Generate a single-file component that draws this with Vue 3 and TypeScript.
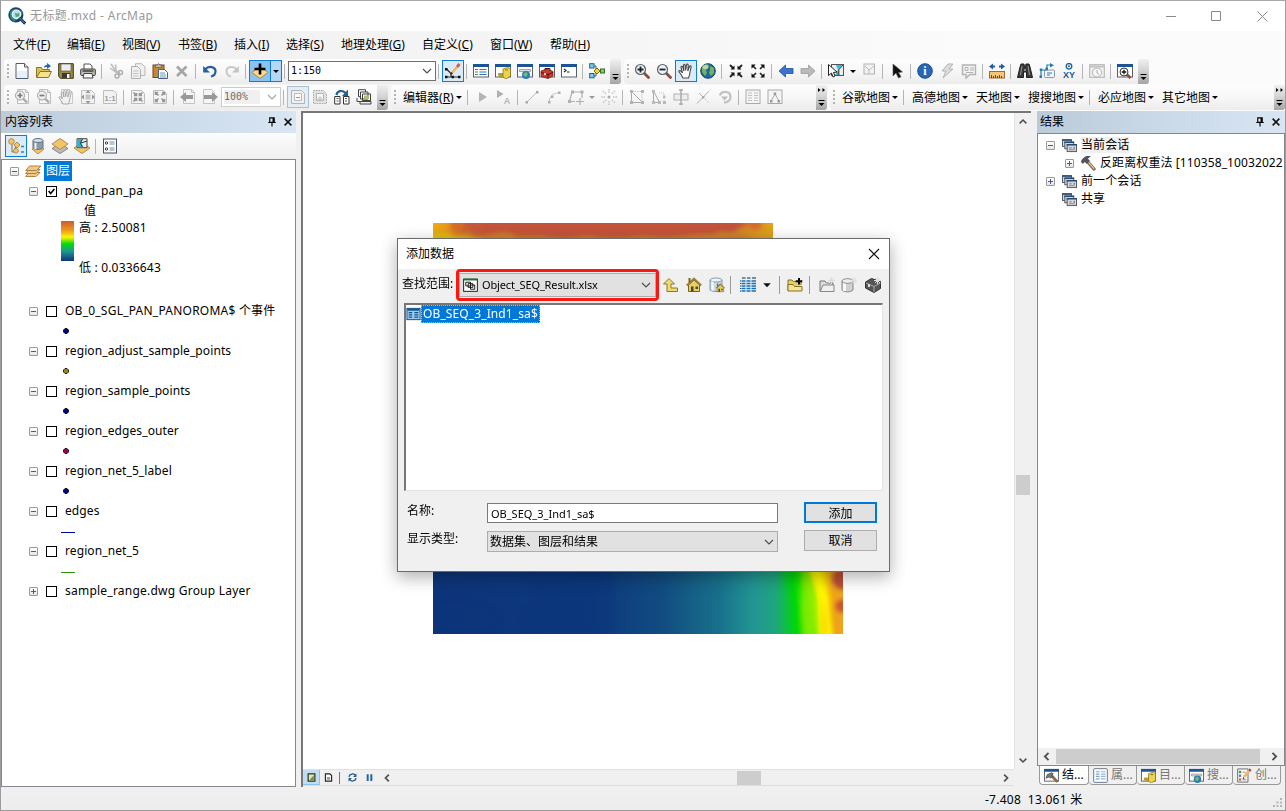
<script setup lang="ts">
import { ref } from 'vue'

interface Tool {
  t: 'icon' | 'sep' | 'scale' | 'zoom' | 'label'
  n?: string
  on?: boolean
  add?: boolean
  arrow?: boolean
  text?: string
  key?: string
}
interface Bar { id: string; double?: boolean; tools: Tool[] }
interface Layer { name: string; open: boolean; dot?: string; line?: string; wide?: boolean }

const sep: Tool = { t: 'sep' }
const icons = (...names: string[]): Tool[] => names.map(n => ({ t: 'icon', n }))
const label = (text: string, key?: string): Tool => ({ t: 'label', text, key })

// Shared fragments
const page = (c: string, f = '#f6f6f6') => `<path d="M3.500.500h8l3 3v11h-11z" fill="${f}" stroke="${c}"/><path d="M11.500.500v3h3" fill="none" stroke="${c}"/>`
const win = (inner: string) => `<rect x=".5" y="1.500" width="15" height="12.500" fill="#fff" stroke="#5a6068"/><rect x="0" y="1" width="16" height="3" fill="#1d5496"/>${inner}`
const grayIn = '<path d="M3.500 3.500l3 3m0-2.500v2.500h-2.500M12.500 3.500l-3 3m0-2.500v2.500h2.500M3.500 12.500l3-3m0 2.500v-2.500h-2.500M12.500 12.500l-3-3m0 2.500v-2.500h2.500" stroke="#959595" stroke-width="1.600" fill="none"/>'
const grayOut = '<path d="M6.500 6.500l-3-3m0 2.500v-2.500h2.500M9.500 6.500l3-3m0 2.500v-2.500h-2.500M6.500 9.500l-3 3m0-2.500v2.500h2.500M9.500 9.500l3 3m0-2.500v2.500h-2.500" stroke="#959595" stroke-width="1.600" fill="none"/>'
const grayBox = '<path d="M1.500 1.500h10l3 3v10h-13z" fill="#f2f2f2" stroke="#bdbdbd"/>'
const handPath = 'M5 15L3 11.500 1 8.800c-.4-1.300 1-1.600 1.900-.6L4.500 10 3 4.500C2.800 3 4.300 2.800 4.700 4L6 8 5.500 2.600C5.400 1 7 1 7.200 2.400L7.700 7.500 8.500 2c.3-1.400 1.800-1.100 1.700.3L9.800 8l1.700-4.500c.5-1.200 1.900-.7 1.600.6L12 9c-.2 2-.6 4-1.500 6z'
const lens = (sign: string) => `<path d="M10 10l4.500 4.500" stroke="#8a4c3a" stroke-width="2.800" stroke-linecap="round"/><circle cx="6.500" cy="6.500" r="5" fill="#e9f3fa" stroke="#59636b" stroke-width="1.200"/><path d="${sign}" stroke="#222" stroke-width="1.800"/>`
const grayLens = (sign: string) => `${page('#bdbdbd')}<path d="M9 9.500l4 4" stroke="#aaa" stroke-width="2.400"/><circle cx="6" cy="6.500" r="4.500" fill="#efefef" stroke="#a0a0a0"/><path d="${sign}" stroke="#7d7d7d" stroke-width="1.700"/>`
const goldHouse = '<path d="M2.500 8v6.500h11V8L8 3z" fill="#e5cf62" stroke="#766126"/><path d="M.7 8.500L8 1.500l7.300 7" fill="none" stroke="#9c8334" stroke-width="1.800"/><path d="M3.500 1v4.500" stroke="#766126" stroke-width="2"/><path d="M5 9.500h2.500v5H5z" fill="#55441c"/><path d="M9.500 9.500h2.500v2.500H9.500z" fill="#4a4a4a"/>'
const gold = '#f0c468'

const art: Record<string, string> = {
  logo: '<circle cx="7" cy="7" r="6.700" fill="#14456b"/><path d="M1.500 4Q5 1 7 2t5 1l1 3-3 4-5 3-3-3z" fill="#2d8674"/><circle cx="7.500" cy="6.500" r="3.800" fill="#b9dcef" stroke="#eef6fb"/><path d="M6 5l2 1 2-1v3l-3 1z" fill="#53a66c"/><path d="M10 9.500l5.300 5.300" stroke="#143850" stroke-width="2.600"/><path d="M10 9.500l4.500 4.500" stroke="#6aa7ca" stroke-width=".8"/>',
  new: '<path d="M2 .5h8.500l3.500 3.500v11.500H2z" fill="#fff" stroke="#555b64"/><path d="M3 8h10v7H3z" fill="#e3f1fc"/><path d="M10.500.5v3.500H14" fill="#dfe9f2" stroke="#555b64"/>',
  open: '<path d="M.5 14.500V4.500h5l1 2h7v3" fill="#d8c356" stroke="#8b7424"/><path d="M.7 14.500L4 8.500h11.500l-3 6z" fill="#f6e18d" stroke="#8b7424"/><path d="M8 5c0-2 1-3 3-3V0l4 3-4 3V4c-1.500 0-2 0-3 1z" fill="#2a67ad"/>',
  save: '<path d="M.7.700h14.600v14.600H2.500L.7 13.500z" fill="#9c8a3c" stroke="#3c3720"/><path d="M3 1h10v7H3z" fill="#e9eef3" stroke="#514a2a" stroke-width=".6"/><path d="M4 10h8.500v5H4z" fill="#3c3b36"/><path d="M9 11h2.500v4H9z" fill="#f4f4f4"/>',
  print: '<path d="M4 6V1h6l2 2v3" fill="#fff" stroke="#555"/><rect x=".7" y="6" width="14.600" height="6.500" rx="1" fill="#bcbcbc" stroke="#3c3c3c"/><path d="M2.500 8h11" stroke="#444" stroke-width="1.600"/><path d="M4 10.500h8l1 4.500H3z" fill="#f8f8f8" stroke="#444"/><path d="M12 9.500h1.500" stroke="#9dc64e" stroke-width="1.500"/>',
  cut: '<path d="M3 1l6 9M7.500 1.500L8 8l4 2.500M2 5l7 5" stroke="#bcbcbc" stroke-width="1.500" fill="none"/><circle cx="12.500" cy="9.500" r="2" fill="none" stroke="#adadad" stroke-width="1.400"/><circle cx="9" cy="13" r="2" fill="none" stroke="#adadad" stroke-width="1.400"/>',
  copy: '<path d="M5.500.700h6l3.500 3v8.800H5.500z" fill="#f0f0f0" stroke="#b8b8b8"/><path d="M1.500 3.500h6l3 3v9h-9z" fill="#f0f0f0" stroke="#b0b0b0"/><path d="M3 8h5.500M3 10.500h5.500M3 13h5.500" stroke="#c4c4c4"/>',
  paste: '<rect x="1" y="2" width="11" height="12.500" fill="#c98636" stroke="#6c4b23"/><path d="M3.500 4.500V2h2L6.500.500 7.500 2h2v2.500z" fill="#b9bcc0" stroke="#555" stroke-width=".7"/><path d="M6.500 6.500h6l3 3v6h-9z" fill="#fff" stroke="#456285"/><path d="M8 10h5M8 12h6M8 14h6" stroke="#6e95bd"/>',
  del: '<path d="M3 3.500l9.500 9.500M12.500 3.500L3 13" stroke="#a5a5a5" stroke-width="2.600"/>',
  undo: '<path d="M3 6.500C7 2 13.500 4 13.500 8c0 3-2 5-4.500 5.500" fill="none" stroke="#245e9f" stroke-width="2.200"/><path d="M1.200 3V9.500H8z" fill="#245e9f"/>',
  redo: '<path d="M13 6.500C9 2 2.500 4 2.500 8c0 3 2 5 4.500 5.500" fill="none" stroke="#c8c8c8" stroke-width="2"/><path d="M14.800 3V9.500H8z" fill="#c4c4c4"/>',
  add: '<path d="M0 9.500l8-6.500 8 6.500-8 6z" fill="#ffd98a" stroke="#a88750"/><path d="M8 .500v11M2.500 6h11" stroke="#000" stroke-width="2.600"/>',
  sketch: '<path d="M1.500 6L6 10.500M2 14h12.500M6 10v4" stroke="#282828" fill="none" stroke-width="1.200"/><path d="M6.500 10.500L12 4" stroke="#f0b46b" stroke-width="2.600"/><path d="M12 4l2.500-3" stroke="#ca604b" stroke-width="2.800"/><path d="M5.500 12l.5-3 2 1.500z" fill="#222"/><path d="M0 5h2.500v2.500H0zM0 12.700h2.500v2.500H0zM6.500 12.700H9v2.500H6.500zM13 12.700h2.500v2.500H13z" fill="#111"/>',
  toc: win('<path d="M2 6.500h3M2 9h3M2 11.500h3" stroke="#4e8946" stroke-width="1.200"/><path d="M6.500 6.500h7M6.500 9h7M6.500 11.500h7" stroke="#2e72bd" stroke-width="1.200"/>'),
  catalog: win('<path d="M3 10h6v5H5l-2-3z" fill="#bb9c33"/><path d="M8 6l5-1.500 2.500 1.500v7l-4.500 3-3-2z" fill="#ecd544" stroke="#8d7625" stroke-width=".8"/><path d="M10 7h3" stroke="#876f20"/>'),
  search: win('<path d="M2.500 6.500h11v2h-11z" fill="#ddd" stroke="#888" stroke-width=".7"/><circle cx="9" cy="12" r="4" fill="#2d7bb6"/><path d="M6 11l3-2 2 2-2 3-2-1z" fill="#73bc63"/>'),
  toolbox: win('<path d="M2 8l6-2 6 2.500V13l-5 2.500-7-2z" fill="#c43d30" stroke="#782219" stroke-width=".8"/><path d="M6 7V5.500h5V8M2 9.500l7 2 5-2M9 11v4" stroke="#50110b" fill="none"/><path d="M5 10h2v2H5z" fill="#efc7bd"/>'),
  python: win('<path d="M3 6l2 1.500L3 9M6 9h2.500" fill="none" stroke="#222" stroke-width="1.200"/>'),
  model: '<path d="M5 3h2v10H5M7 8h5" fill="none" stroke="#4b5d70"/><rect x=".7" y=".700" width="4.300" height="4.300" fill="#84cde8" stroke="#126791"/><rect x=".7" y="10.500" width="4.300" height="4.300" fill="#84cde8" stroke="#126791"/><path d="M8 5l3 3-3 3-3-3z" fill="#f6d33c" stroke="#826b0d"/><rect x="11.500" y="6" width="4" height="4" fill="#84cb72" stroke="#2f6d29"/>',
  zoomin: lens('M6.500 3.500v6M3.500 6.500h6'),
  zoomout: lens('M3.500 6.500h6'),
  hand: `<path d="${handPath}" fill="#fff" stroke="#4a4a4a" stroke-width="1.100"/>`,
  globe: '<circle cx="8" cy="8" r="7.300" fill="#1c66ad" stroke="#164272"/><path d="M2 4l4-3 3 1-1 3-2 2 1 3-2 3-3-4zM10 3l4 2v5l-3 3-2-3 1-3z" fill="#77b254"/><ellipse cx="5.500" cy="4" rx="3" ry="2" fill="#fff" opacity=".5"/>',
  fixin: '<path d="M2 2l3 3M14 2l-3 3M2 14l3-3M14 14l-3-3" stroke="#222" stroke-width="1.800"/><path d="M6.500 2.500v4H2.500zM9.500 2.500v4h4zM6.500 13.500v-4h-4zM9.500 13.500v-4h4z" fill="#111"/>',
  fixout: '<path d="M3 3l3 3M13 3l-3 3M3 13l3-3M13 13l-3-3" stroke="#222" stroke-width="1.600"/><path d="M1.500 5.700V1.500h4.200zM14.500 5.700V1.500h-4.200zM1.500 10.300v4.200h4.200zM14.500 10.300v4.200h-4.200z" fill="#111"/>',
  back: '<path d="M1 8l6.500-6v3.500H15v5H7.500V14z" fill="#3873d0" stroke="#244f9c" stroke-width=".8"/>',
  forward: '<path d="M15 8L8.500 2v3.500H1v5h7.500V14z" fill="#b9b9b9" stroke="#9c9c9c" stroke-width=".8"/>',
  select: '<rect x="3.500" y="1.500" width="12" height="11" fill="#eee" stroke="#555"/><path d="M8 2h7l-4 4 1 6H7l3-5z" fill="#35bde4"/><path d="M10 12.500l1-6 4-4.500" stroke="#444" fill="none"/><path d="M.5 1.500v11l3-2.500 1.500 4 2-1-1.500-3.500 3.500-.5z" fill="#fff" stroke="#222"/>',
  clear: '<rect x="3" y="1" width="10.500" height="10" fill="#f2f2f2" stroke="#b2b2b2"/><path d="M4 3l4 4 5-4M8 7v4" stroke="#bbb" fill="none"/>',
  pointer: '<path d="M4 1v12l3-3 2.500 5 2.500-1.200L9.500 9.500 13.500 9z" fill="#111" stroke="#555" stroke-width=".6"/>',
  info: '<circle cx="8" cy="8" r="7.300" fill="#2966b7" stroke="#174c92"/><text x="8" y="12.300" text-anchor="middle" font-family="Liberation Serif,serif" font-weight="bold" font-size="12" fill="#fff">i</text>',
  bolt: '<path d="M9 1L3 8h4l-3 7 10-9h-4l4-5z" fill="#ddd" stroke="#b4b4b4"/>',
  popup: '<path d="M1.500 2h13v9.500H9L5 15v-3.500H1.500z" fill="#f3f3f3" stroke="#b2b2b2" stroke-width="1.400"/><path d="M4 4.500h3v3H4zM9 5h4M9 7h4M5 9.500h7" stroke="#b2b2b2" fill="none"/>',
  measure: '<path d="M2 3.500h4M10 3.500h4" stroke="#245d9d" stroke-width="1.800"/><path d="M0 3.500L4 .500v6zM16 3.500l-4-3v6z" fill="#245d9d"/><rect x=".5" y="8.500" width="15" height="6.500" fill="#f5c679" stroke="#9b6c38"/><path d="M2.500 15v-3M4.500 15v-2M6.500 15v-3M8.500 15v-2M10.500 15v-3M12.500 15v-2" stroke="#6d4a25"/>',
  find: '<path d="M3 4l1-3h3l.5 3h1L9 1h3l1 3 2.500 10.500H9.500V9h-3v5.500H.5z" fill="#383838" stroke="#222"/><path d="M5 3L3.500 12M11 3l1.500 9" stroke="#999"/><path d="M7 6h2v2H7z" fill="#888"/>',
  route: '<rect x="5.500" y="7" width="10" height="7.500" rx="1" fill="#f4f8fc" stroke="#8099ae"/><path d="M2 13V7h6V2h4" fill="none" stroke="#287ab1" stroke-width="1.200"/><path d="M11 0l4 2.200-4 2.300zM.8 5.500h2.500V8H.8zM.5 12.500H3V15H.5zM6.500 4.500H9V7H6.500z" fill="#287ab1"/><path d="M8 10h5M8 12h3" stroke="#287ab1"/>',
  xy: '<circle cx="8" cy="3.300" r="2.800" fill="none" stroke="#1c639e" stroke-width="1.400"/><circle cx="8" cy="3.300" r="1" fill="#1c639e"/><text x="8" y="15" text-anchor="middle" font-family="Liberation Sans,sans-serif" font-weight="bold" font-size="9" fill="#1c5696">XY</text>',
  time: '<rect x=".7" y="1.700" width="14.600" height="12.600" fill="#eee" stroke="#b2b2b2"/><path d="M1 3.500h14" stroke="#c2c2c2" stroke-width="2"/><circle cx="8" cy="9.500" r="4.500" fill="#f7f7f7" stroke="#b2b2b2"/><path d="M8 7v3l2 1.500" stroke="#aaa" fill="none"/>',
  viewer: win('<path d="M9.500 11l4 4" stroke="#87503d" stroke-width="2.600"/><circle cx="7" cy="9" r="4" fill="#fff" stroke="#333"/><path d="M7 6.700v4.600M4.700 9h4.600" stroke="#111" stroke-width="1.300"/>'),
  gzoomin: grayLens('M6 4v5M3.500 6.500h5'),
  gzoomout: grayLens('M3.500 6.500h5'),
  ghand: page('#c8c8c8') + `<path d="${handPath}" fill="#f1f1f1" stroke="#a2a2a2" stroke-width=".9"/>`,
  gwhole: grayBox + '<path d="M8 1l2.500 3h-5zM8 15l2.500-3h-5zM1 8l3-2.500v5zM15 8l-3-2.500v5z" fill="#999"/><rect x="5.500" y="5.500" width="5" height="5" fill="#c4c4c4"/>',
  gone: grayBox + '<text x="8" y="11.500" text-anchor="middle" font-family="Liberation Sans,sans-serif" font-weight="bold" font-size="8" fill="#a0a0a0">1:1</text>',
  gfixin: grayBox + grayIn,
  gfixout: grayBox + grayOut,
  gback: page('#c2c2c2') + '<path d="M0 8l6-5v3h7v4H6v3z" fill="#999"/>',
  gforward: '<path d="M1.500.500h8l3 3v11h-11z" fill="#f6f6f6" stroke="#c2c2c2"/><path d="M16 8l-6-5v3H2v4h8v3z" fill="#999"/>',
  gdraft: '<path d="M1.500 1.500h10l3 3v10h-13z" fill="#f0f0f0" stroke="#b5b5b5"/><path d="M4.500 4.500h7v7h-7z" fill="#fafafa" stroke="#bbb"/><path d="M6 8.500h4" stroke="#999"/>',
  gfocus: '<path d="M1.500 1.500h10l3 3v10h-13z" fill="#e2e2e2" stroke="#a6a6a6" stroke-dasharray="1.500 1"/><path d="M4.500 4.500h7v7h-7z" fill="#f8f8f8" stroke="#b5b5b5"/><path d="M5 11l3-4 3 4z" fill="#ccc"/>',
  swap: '<path d="M2.500 6C3 2 8 .5 11.500 4" fill="none" stroke="#28618e" stroke-width="2.200"/><path d="M14 .500v6.500H8z" fill="#28618e"/><path d="M.7 7.500h5.300v7.500H.7zM9.500 7.500h5.500v7.500H9.500z" fill="#fff" stroke="#333"/><path d="M2.500 9.500h2M2.500 12h2M11 9.500h2M11 12h2" stroke="#555"/>',
  pages: '<path d="M2.500.700h7v7h-7z" fill="#fff" stroke="#404040"/><path d="M4.500 3h7.500v7H4.500zM6.500 5h8v6.500h-8z" fill="#fff" stroke="#404040"/><path d="M8 6.500h5v3.500H8z" fill="#a8bd75"/><path d="M1 9v3.500h14v2.500H4v-2" fill="none" stroke="#444"/>',
  play: '<path d="M5 3v10l8-5z" fill="#b5b5b5"/>',
  playa: '<path d="M1 1v8l6.500-4z" fill="#b0b0b0"/><text x="11" y="15" text-anchor="middle" font-family="Liberation Sans,sans-serif" font-weight="bold" font-size="9" fill="#b5b5b5">A</text>',
  line: '<path d="M3 13L12.500 3.500" stroke="#b8b8b8"/><path d="M1.500 12H4v2.500H1.500zM12 2h2.500v2.500H12z" fill="#a8a8a8"/>',
  arc: '<path d="M3 13C4 7 7 4 12.500 4" fill="none" stroke="#c4c4c4"/><path d="M2 12h2.500v2.500H2zM5 6.500h2.500V9H5zM12 2.500h2.500V5H12z" fill="#b0b0b0"/>',
  trace: '<path d="M1.500 12.500H7M4 3h10v6M4 3L1.500 12.500M8 12.500h8M12 9v7" fill="none" stroke="#b0b0b0" stroke-width="1.200"/><path d="M0 11h3v3H0zM3 1.500h3v3H3zM12.500 1.500h3v3h-3z" fill="#b0b0b0"/>',
  burst: '<path d="M8 0v4M8 12v4M0 8h4M12 8h4M2 2l3 3M11 11l3 3M14 2l-3 3M5 11l-3 3" stroke="#c2c2c2" stroke-width="1.500" stroke-dasharray="1.500 1"/><circle cx="8" cy="8" r="1.500" fill="#aaa"/>',
  poly: '<path d="M2.500 3v10.500h11L2.500 2.500" fill="none" stroke="#aaa"/><path d="M3 2.500h10v10" fill="none" stroke="#c0c0c0" stroke-dasharray="1.500 1"/><path d="M1 1h3v3H1zM12 1h3v3h-3zM1 12h3v3H1zM12 12h3v3h-3z" fill="#b2b2b2"/>',
  reshape: '<path d="M2.500 2v11.500h6L2.500 2" fill="none" stroke="#aaa"/><path d="M8 4h5v9" fill="none" stroke="#c4c4c4" stroke-dasharray="1 1"/><path d="M1 1h3v3H1zM1 12h3v3H1zM7 12h3v3H7zM12 6.500h2.500V9H12zM12 12h3v3h-3z" fill="#bbb"/>',
  cutpoly: '<rect x="1" y="5" width="14" height="6" fill="#eee" stroke="#b0b0b0"/><path d="M8 0v16M6 1h4M6 15h4" stroke="#aaa" stroke-width="1.500"/>',
  split: '<path d="M2 14.500L14 2M4 4l5 5" stroke="#b0b0b0"/><path d="M7 7h2.500v2.500H7z" fill="#aaa"/><path d="M10 10l4 4" stroke="#c4c4c4" stroke-dasharray="1.500 1"/>',
  rotate: '<path d="M3 6.500c1-5 10-5 10.500 1 0 4-3 6-6.500 6" fill="none" stroke="#c4c4c4" stroke-width="2.400"/><path d="M4 7.500h7l-3.500 4z" fill="#bbb"/>',
  table: '<rect x="1" y="1" width="14" height="13.500" fill="#f5f5f5" stroke="#aaa"/><path d="M3 4h4M9 4h4M3 6.500h4M9 6.500h4M3 9h4M9 9h4M3 11.500h4M9 11.500h4" stroke="#c0c0c0" stroke-width="1.200"/>',
  vertex: '<rect x="1" y="1" width="14" height="13.500" fill="#f5f5f5" stroke="#aaa"/><path d="M4 12l4-7 4 7" fill="none" stroke="#aaa"/><path d="M3 11h2.500v2.500H3zM6.700 3.500h2.500V6H6.700zM10.500 11H13v2.500h-2.500z" fill="#999"/>',
  bydraw: `<path d="M4 5v9h6M8 8l-2 5" stroke="#887141" fill="none"/><circle cx="3.500" cy="3.500" r="2.800" fill="${gold}" stroke="#b38b47"/><path d="M9 4l3 3-3 3-3-3zM8 10l3 2.700-3 2.700-3-2.700z" fill="${gold}" stroke="#b38b47"/><path d="M13 8.500h3M13 14h3" stroke="#3982aa" stroke-width="1.600"/>`,
  bysource: `<path d="M2 11l6-3 6 3-6 5z" fill="${gold}" stroke="#b38b47"/><path d="M3 2.500v7c1.500 2.500 8.500 2.500 10 0v-7z" fill="#8b9baa" stroke="#5f7081"/><path d="M5.500 3v8" stroke="#eef3f7" stroke-width="2"/><ellipse cx="8" cy="2.500" rx="5" ry="2" fill="#d7e1e9" stroke="#5f7081"/>`,
  byvis: `<path d="M0 10.500l8-5 8 5-8 5z" fill="#bbb" stroke="#888"/><path d="M0 6l8-5.500L16 6l-8 5.500z" fill="${gold}" stroke="#b38b47"/>`,
  bysel: `<path d="M0 10l8-5 8 5-8 5.500z" fill="${gold}" stroke="#b38b47"/><path d="M3 .7h10v9H3z" fill="#e4eef0" stroke="#444"/><path d="M3.500 1h5l-2 4 3 4.200h-6z" fill="#27b6d0"/><path d="M8.500 9l-2-4 2-4M7 5l6-2" stroke="#333" fill="none"/>`,
  opts: '<rect x="1.500" y="1" width="13" height="14" fill="#fff" stroke="#465566"/><circle cx="4.500" cy="5" r="1.200" fill="none" stroke="#333"/><circle cx="4.500" cy="11" r="1.200" fill="none" stroke="#333"/><path d="M7.500 4h5M7.500 6h5M7.500 10h5M7.500 12h5" stroke="#7486a2"/>',
  layers: '<g fill="#f1c987" stroke="#a57841" stroke-width=".9"><path d="M.6 13.500L4 9.500h11l-4 4z"/><path d="M.6 10.500L4 6.500h11l-4 4z"/><path d="M.8 7.500L4.500 3H16l-4.500 4.500z"/></g>',
  session: '<g fill="#d4d7db" stroke="#4d545f"><rect x=".5" y="2" width="9.500" height="7"/><rect x="3" y="4.500" width="9.500" height="7"/><rect x="5.500" y="7" width="10" height="7.500"/></g><path d="M0 2h10.500M2.500 4.500h10.500M5 7.200H16" stroke="#27486f" stroke-width="1.600"/><path d="M7.500 10.500h3M7.500 12.500h6" stroke="#888"/><path d="M13 9.500v2" stroke="#555"/>',
  hammer: '<path d="M7 6l7 8" stroke="#817260" stroke-width="3.400" stroke-linecap="round"/><path d="M7 5.500l7 8" stroke="#d7c3a0" stroke-width="1.300"/><path d="M0 6l2-3 4-3h4L7 3l2 2-2.500 3L4 6 2 8z" fill="#55585b" stroke="#303030" stroke-width=".6"/>',
  hamwin: win('<path d="M8 8l5.500 6" stroke="#8b6848" stroke-width="3" stroke-linecap="round"/><path d="M2 11l1.500-4L8 5l2 1-2 2 1 1-2 2-1.500-1.500z" fill="#777" stroke="#333" stroke-width=".6"/>'),
  attrs: '<rect x=".7" y=".7" width="14.600" height="14.600" rx="1" fill="#fff" stroke="#637383"/><path d="M3 4h4M3 6.500h4M3 9h4M3 11.500h4" stroke="#7aa2c9" stroke-width="1.300"/><path d="M8.500 4h5M8.500 6.500h5M8.500 9h5M8.500 11.500h5" stroke="#8eb8dd" stroke-width="1.300"/>',
  create: '<path d="M.7 1h11v14H.7z" fill="#f7f7f7" stroke="#666"/><path d="M2 3h2.500v2.500H2z" fill="#4c8d54"/><path d="M2 11h2.500v2.500H2z" fill="#c76b41"/><path d="M2 7h2.500v2.500H2z" fill="#4b84b9"/><path d="M6 4.500h3M6 12.500h4" stroke="#888"/><path d="M7.500 9.500L13 3" stroke="#efb765" stroke-width="2.800"/><path d="M13 3l1.500-1.800" stroke="#b64e49" stroke-width="3"/><path d="M6 12l.5-2.500 1.700 1.300z" fill="#333"/>',
  sheets: '<rect x=".7" y="1.200" width="14.600" height="13" fill="#fff" stroke="#111"/><path d="M1 1.700h14" stroke="#1a722a" stroke-width="1.800"/><g fill="#fff" stroke="#111"><path d="M3 4.500h5v4H3zM5.500 6h5v4h-5zM8 7.500h4.500V12H8z"/></g>',
  up: '<path d="M.5 7L6 1.500 11.500 7H8v4h6.500v3.500H4V7z" fill="#efdb6b" stroke="#8b7830"/>',
  home: goldHouse,
  dbhome: `<path d="M1 3v10c2 2 10 2 12 0V3z" fill="#c8dbe9" stroke="#8199aa"/><ellipse cx="7" cy="3" rx="6" ry="2" fill="#edf5fa" stroke="#8199aa"/><path d="M3.500 4.500v9" stroke="#fff" stroke-width="2"/><g transform="translate(6.500 6) scale(.6)">${goldHouse}</g>`,
  list: '<path d="M2 1h3.500M7 1h3.500M12 1h4" stroke="#4f6d84" stroke-width="1.400"/><path d="M1.500 4h4M6.500 4h4M11.500 4H16M1.500 6.500h4M6.500 6.500h4M11.500 6.500H16M1.500 9h4M6.500 9h4M11.500 9H16M1.500 11.500h4M6.500 11.500h4M11.500 11.500H16M1.500 14h4M6.500 14h4M11.500 14H16" stroke="#1272c0" stroke-width="1.300"/><path d="M0 4h1M0 6.500h1M0 9h1M0 11.500h1M0 14h1" stroke="#333"/>',
  link: '<path d="M1 14V3h4l1.500 1.500H14V8" fill="#e4cf62" stroke="#8a732a"/><path d="M1 14V7.500h5l1.500 2H15V14z" fill="#f4e495" stroke="#8a732a"/><path d="M12 1v6.500M8.700 4.200h6.600" stroke="#000" stroke-width="2"/>',
  newfolder: '<path d="M1 14.500V4h5l1.500 2H14v8.500z" fill="#ddd" stroke="#777"/><path d="M1.500 14L4 8h11v6.500H1.500" fill="#efefef" stroke="#888"/><path d="M12.500 0v7M9 3.500h7M10 1l5 5M15 1l-5 5" stroke="#ddd"/>',
  newdb: '<path d="M1 4v9c2 2.500 9 2.500 11 0V4z" fill="#d0d0d0" stroke="#888"/><path d="M3.500 5v9" stroke="#f8f8f8" stroke-width="3"/><ellipse cx="6.500" cy="4" rx="5.500" ry="2.300" fill="#eee" stroke="#888"/><path d="M13 0v7M9.500 3.500H16M10.500 1l5 5M15.500 1l-5 5" stroke="#ddd"/>',
  newbox: '<path d="M.5 5l6-3.500 9 3v7L9 15.500.5 11z" fill="#555" stroke="#333"/><path d="M1 6l8 3.500L15.500 6M9 9.500V15" fill="none" stroke="#aaa"/><path d="M4 7v3" stroke="#ddd" stroke-width="2"/><path d="M12.500 0v7M9 3.500h7M10 1l5 5M15 1l-5 5" stroke="#ddd"/>',
  sheet: '<rect x=".5" y="1.500" width="15" height="13" fill="#9dcbf0" stroke="#0b406e"/><path d="M1 3h14" stroke="#16588d" stroke-width="2.500"/><path d="M2.500 6.500h4M2.500 9h4M2.500 11.500h4M9 6.500h4.500M9 9h4.500M9 11.500h4.500" stroke="#0c548f" stroke-width="1.500"/>',
  pin: '<path d="M5 2.500h6v6H5zM9.500 2.500v6M3 8.700h10M8 9v5" fill="none" stroke="#000" stroke-width="1.500"/>',
  close: '<path d="M3.500 3.500l9 9M12.500 3.500l-9 9" stroke="#111" stroke-width="2"/>',
  chevL: '<path d="M10.500 3.500L6 8l4.500 4.500" fill="none" stroke="#505050" stroke-width="2.300"/>',
  chevR: '<path d="M5.500 3.500L10 8l-4.500 4.500" fill="none" stroke="#505050" stroke-width="2.300"/>',
  chevU: '<path d="M3.500 10.500L8 6l4.500 4.500" fill="none" stroke="#505050" stroke-width="2.100"/>',
  chevD: '<path d="M3.500 5.500L8 10l4.500-4.500" fill="none" stroke="#505050" stroke-width="2.100"/>',
  drop: '<path d="M4 6l4 4 4-4" fill="none" stroke="#505050" stroke-width="1.200"/>',
  tri: '<path d="M3 5.500h10L8 11z" fill="#111"/>',
  dataview: '<rect x="2" y="1.500" width="12" height="13" fill="#e8e7a0" stroke="#222" stroke-width="2"/><path d="M4 13l8-9v9z" fill="#629650"/>',
  layoutview: '<path d="M2.500 1.500h8l3 3v10h-11z" fill="#fff" stroke="#222" stroke-width="2"/><path d="M5 7h6v5H5z" fill="#84a4b2"/>',
  refresh: '<path d="M2 7c0-6 9-7 12-2M14 9c0 6-9 7-12 2" fill="none" stroke="#245b8d" stroke-width="2.200"/><path d="M15 1v6H9zM1 15V9h6z" fill="#245b8d"/>',
  pause: '<path d="M3 2h3.500v12H3zM9.500 2H13v12H9.500z" fill="#2462ae"/>'
}

const menus = [
  ['文件', 'F'], ['编辑', 'E'], ['视图', 'V'], ['书签', 'B'], ['插入', 'I'],
  ['选择', 'S'], ['地理处理', 'G'], ['自定义', 'C'], ['窗口', 'W'], ['帮助', 'H']
]

const rows: Bar[][] = [
  [
    { id: 'standard', tools: [...icons('new', 'open', 'save', 'print'), sep, ...icons('cut', 'copy', 'paste', 'del'), sep, ...icons('undo', 'redo'), sep, { t: 'icon', n: 'add', add: true, arrow: true }, sep, { t: 'scale' }, sep, { t: 'icon', n: 'sketch', on: true }, sep, ...icons('toc', 'catalog', 'search', 'toolbox', 'python'), sep, ...icons('model')] },
    { id: 'tools', tools: [...icons('zoomin', 'zoomout'), { t: 'icon', n: 'hand', on: true }, ...icons('globe'), sep, ...icons('fixin', 'fixout'), sep, ...icons('back', 'forward'), sep, { t: 'icon', n: 'select', arrow: true }, ...icons('clear'), sep, ...icons('pointer'), sep, ...icons('info', 'bolt', 'popup'), sep, ...icons('measure'), sep, ...icons('find', 'route', 'xy'), sep, ...icons('time'), sep, ...icons('viewer')] }
  ],
  [
    { id: 'layout', tools: [...icons('gzoomin', 'gzoomout', 'ghand', 'gwhole', 'gone'), sep, ...icons('gfixin', 'gfixout'), sep, ...icons('gback', 'gforward'), { t: 'zoom' }, sep, { t: 'icon', n: 'gdraft', on: true }, ...icons('gfocus', 'swap', 'pages')] },
    { id: 'editor', double: true, tools: [label('编辑器', 'R'), sep, ...icons('play', 'playa'), sep, ...icons('line', 'arc'), { t: 'icon', n: 'trace', arrow: true }, ...icons('burst'), sep, ...icons('poly', 'reshape', 'cutpoly', 'split', 'rotate'), sep, ...icons('table', 'vertex')] },
    { id: 'maps', double: true, tools: [label('谷歌地图'), sep, label('高德地图'), label('天地图'), label('搜搜地图'), sep, label('必应地图'), label('其它地图')] }
  ]
]

const layers = ref<Layer[]>([
  { name: 'OB_0_SGL_PAN_PANOROMA$ 个事件', open: true, dot: 'navy', wide: true },
  { name: 'region_adjust_sample_points', open: true, dot: 'olive' },
  { name: 'region_sample_points', open: true, dot: 'navy' },
  { name: 'region_edges_outer', open: true, dot: 'wine' },
  { name: 'region_net_5_label', open: true, dot: 'navy' },
  { name: 'edges', open: true, line: 'blue' },
  { name: 'region_net_5', open: true, line: 'green' },
  { name: 'sample_range.dwg Group Layer', open: false, wide: true }
])

const tabs = [
  { icon: 'hamwin', text: '结...' }, { icon: 'attrs', text: '属...' }, { icon: 'catalog', text: '目...' },
  { icon: 'search', text: '搜...' }, { icon: 'create', text: '创...' }
]
const fileName = ref('OB_SEQ_3_Ind1_sa$')
</script>

<template>
  <div class="window">
    <header class="titlebar">
      <svg class="logo" viewBox="0 0 16 16" v-html="art.logo" />
      <span class="title">无标题.mxd - ArcMap</span>
      <svg class="winbtns" viewBox="0 0 110 14"><path d="M1 7.500h10M46.500 2.500h9v9h-9zM92.500 2.500l10 10M102.500 2.500l-10 10" fill="none" stroke="#8a8a8a" /></svg>
    </header>

    <nav class="menu">
      <span v-for="m in menus" :key="m[1]">{{ m[0] }}(<u>{{ m[1] }}</u>)</span>
    </nav>

    <div class="bars">
      <div v-for="(row, r) in rows" :key="r" class="barrow">
        <div v-for="bar in row" :key="bar.id" class="bar" :class="bar.id">
          <i class="grip" />
          <template v-for="(tool, i) in bar.tools" :key="i">
            <i v-if="tool.t === 'sep'" class="sep" />
            <div v-else-if="tool.t === 'scale'" class="scale"><span>1:150</span><svg viewBox="0 0 16 16" v-html="art.drop" /></div>
            <div v-else-if="tool.t === 'zoom'" class="scale zoom"><span>100%</span><svg viewBox="0 0 16 16" v-html="art.drop" /></div>
            <div v-else-if="tool.t === 'label'" class="label">
              <span>{{ tool.text }}<template v-if="tool.key">(<u>{{ tool.key }}</u>)</template></span><i class="arrow" />
            </div>
            <div v-else class="tool" :class="{ on: tool.on, add: tool.add }">
              <span class="cell"><svg viewBox="0 0 16 16" v-html="art[tool.n ?? '']" /></span>
              <span v-if="tool.arrow" class="split"><i class="arrow" :class="{ dim: tool.n === 'trace' }" /></span>
            </div>
          </template>
          <div class="overflow">
            <svg viewBox="0 0 11 24"><path v-if="bar.double" d="M2 3l2.500 2L2 7zM6.500 3L9 5 6.500 7z" fill="#000" /><path d="M2.500 15.500h6" stroke="#000" /><path d="M2.500 18h6l-3 3z" fill="#000" /></svg>
          </div>
        </div>
      </div>
    </div>

    <main class="work">
      <section class="toc">
        <div class="panehead"><span>内容列表</span><svg viewBox="0 0 16 16" v-html="art.pin" /><svg viewBox="0 0 16 16" v-html="art.close" /></div>
        <div class="toctools">
          <div class="tool on"><span class="cell"><svg viewBox="0 0 16 16" v-html="art.bydraw" /></span></div>
          <div v-for="n in ['bysource', 'byvis', 'bysel']" :key="n" class="tool"><span class="cell"><svg viewBox="0 0 16 16" v-html="art[n]" /></span></div>
          <i class="sep" />
          <div class="tool"><span class="cell"><svg viewBox="0 0 16 16" v-html="art.opts" /></span></div>
        </div>
        <div class="tree">
          <div class="node root"><i class="exp" /><svg viewBox="0 0 16 16" v-html="art.layers" /><b>图层</b></div>
          <div class="node"><i class="exp" /><i class="check"><svg viewBox="0 0 11 11"><path d="M2 5l2.500 3L9 2.500" fill="none" stroke="#000" stroke-width="2" /></svg></i><span class="wide">pond_pan_pa</span></div>
          <div class="legend">
            <div class="val">值</div>
            <div class="ramprow"><i class="ramp" /><div class="limits"><span>高 : 2.50081</span><span>低 : 0.0336643</span></div></div>
          </div>
          <template v-for="l in layers" :key="l.name">
            <div class="node"><i class="exp" :class="{ plus: !l.open }" /><i class="check" /><span :class="{ wide: l.wide }">{{ l.name }}</span></div>
            <div v-if="l.open" class="symbol">
              <svg v-if="l.dot" class="dot" :class="l.dot" viewBox="0 0 6 6"><path d="M2 .5h2L5.500 2v2L4 5.500H2L.5 4V2z" stroke="#000" stroke-width=".8" /></svg>
              <i v-else class="line" :class="l.line" />
            </div>
          </template>
        </div>
      </section>

      <section class="map">
        <div class="canvas">
          <svg class="raster" viewBox="0 0 410 411">
            <defs>
              <linearGradient id="field" x1="0" y1="0" x2="1" y2="0">
                <stop offset="0" stop-color="#0d357b" /><stop offset=".4" stop-color="#0d397e" /><stop offset=".56" stop-color="#114c80" />
                <stop offset=".7" stop-color="#18718c" /><stop offset=".78" stop-color="#229493" /><stop offset=".835" stop-color="#1fa580" />
                <stop offset=".885" stop-color="#00d70c" /><stop offset=".91" stop-color="#62e600" /><stop offset=".94" stop-color="#fff800" />
                <stop offset=".965" stop-color="#f7c30b" /><stop offset="1" stop-color="#e68720" />
              </linearGradient>
              <linearGradient id="topband" x1="0" y1="0" x2="1" y2="0">
                <stop offset="0" stop-color="#f0ac12" /><stop offset=".04" stop-color="#e79a1b" /><stop offset=".09" stop-color="#cd612f" />
                <stop offset=".16" stop-color="#c4533b" /><stop offset=".9" stop-color="#c4533b" /><stop offset=".95" stop-color="#df8122" /><stop offset="1" stop-color="#e8a417" />
              </linearGradient>
              <filter id="soft" x="-20%" y="-20%" width="140%" height="140%"><feGaussianBlur stdDeviation="2.200" /></filter>
              <clipPath id="extent"><path d="M0 0h340v180h70v231H0z" /></clipPath>
            </defs>
            <g clip-path="url(#extent)">
              <rect width="410" height="411" fill="url(#field)" />
              <rect width="340" height="34" fill="url(#topband)" />
              <g filter="url(#soft)">
                <path d="M-6 8q12-4 20 2t16 0q6-1 10 2t24-2q12-2 20 3l22 0 24 2 24-2 28 2 28-2 25 1 24-2 21-1 18-4 12-3 18-5 12-2v35H-6z" fill="#d9a01a" opacity=".6" />
                <path d="M-6 11q15-2 29 2l26 3v10H-6z" fill="#e0cc10" opacity=".8" />
                <ellipse cx="24" cy="2" rx="6" ry="6" fill="#d46c25" /><ellipse cx="42" cy="2" rx="8" ry="6" fill="#c4583a" />
                <ellipse cx="295" cy="3" rx="12" ry="7" fill="#c2523a" /><ellipse cx="322" cy="2" rx="7" ry="5" fill="#d46b29" />
                <path d="M349 330q-1 22 7 40t8 52h22q0-46-10-92z" fill="#00d80c" opacity=".45" />
                <path d="M362 330q9 26 13 48t14 44l-20-4q-1-24-5-40z" fill="#1de408" opacity=".65" />
                <path d="M371 330q14 30 14 48t3 44l-16-3q-4-30-3-42z" fill="#b0f000" opacity=".6" />
                <path d="M374 330q20 32 21 48t6 44h-8q2-31-6-47t-13-45z" fill="#fff500" />
                <path d="M397 330q-2 22 3 42l4 50h14v-92z" fill="#eda31a" />
                <circle cx="410" cy="356" r="11" fill="#bd4e36" /><circle cx="409" cy="383" r="7" fill="#cb572b" />
              </g>
              <g fill="#0b327a" opacity=".2" filter="url(#soft)"><path d="M0 374q34 1 55 8t12 29H0zM80 345q49 5 100-2v68H97q-23-21 9-34z" /></g>
            </g>
          </svg>
        </div>
        <div class="vscroll"><svg viewBox="0 0 16 16" v-html="art.chevU" /><i /><svg viewBox="0 0 16 16" v-html="art.chevD" /></div>
        <div class="hscroll">
          <span class="viewbtn on"><svg viewBox="0 0 16 16" v-html="art.dataview" /></span>
          <span class="viewbtn"><svg viewBox="0 0 16 16" v-html="art.layoutview" /></span>
          <i class="vbar" />
          <span class="viewbtn r"><svg viewBox="0 0 16 16" v-html="art.refresh" /></span>
          <span class="viewbtn"><svg viewBox="0 0 16 16" v-html="art.pause" /></span>
          <svg class="larr" viewBox="0 0 16 16" v-html="art.chevL" />
          <i class="thumb" />
          <svg class="rarr" viewBox="0 0 16 16" v-html="art.chevR" />
        </div>
      </section>

      <section class="results">
        <div class="panehead"><span>结果</span><svg viewBox="0 0 16 16" v-html="art.pin" /><svg viewBox="0 0 16 16" v-html="art.close" /></div>
        <div class="restree">
          <div class="res"><i class="exp" /><svg viewBox="0 0 16 16" v-html="art.session" /><span class="cur">当前会话</span></div>
          <div class="res sub"><i class="exp plus" /><svg viewBox="0 0 16 16" v-html="art.hammer" /><span>反距离权重法 [110358_10032022</span></div>
          <div class="res"><i class="exp plus" /><svg viewBox="0 0 16 16" v-html="art.session" /><span>前一个会话</span></div>
          <div class="res"><i class="exp none" /><svg viewBox="0 0 16 16" v-html="art.session" /><span>共享</span></div>
          <div class="rscroll"><svg viewBox="0 0 16 16" v-html="art.chevL" /><i /><svg viewBox="0 0 16 16" v-html="art.chevR" /></div>
        </div>
        <div class="tabs">
          <div v-for="(t, i) in tabs" :key="t.icon" class="tab" :class="{ active: i === 0 }"><svg viewBox="0 0 16 16" v-html="art[t.icon]" /><span>{{ t.text }}</span></div>
        </div>
      </section>
    </main>

    <footer class="status">
      <span class="coords">-7.408&nbsp; 13.061 米</span>
      <svg viewBox="0 0 10 10"><path d="M7 0h2v2H7zM7 3.500h2v2H7zM3.500 3.500h2v2h-2zM0 7h2v2H0zM3.500 7h2v2h-2zM7 7h2v2H7z" fill="#b5b5b5" /></svg>
    </footer>

    <div class="dialog">
      <div class="dtitle"><span>添加数据</span><svg viewBox="0 0 12 12"><path d="M1 1l10 10M11 1L1 11" stroke="#111" stroke-width="1.100" /></svg></div>
      <div class="dlook">
        <span class="dlabel">查找范围:</span>
        <div class="redbox"><div class="dcombo"><svg viewBox="0 0 16 16" v-html="art.sheets" /><span>Object_SEQ_Result.xlsx</span><svg class="dd" viewBox="0 0 16 16" v-html="art.drop" /></div></div>
        <div class="dtools">
          <svg v-for="n in ['up', 'home', 'dbhome']" :key="n" viewBox="0 0 16 16" v-html="art[n]" /><i class="dsep" />
          <svg viewBox="0 0 16 16" v-html="art.list" /><svg class="tri" viewBox="0 0 16 16" v-html="art.tri" /><i class="dsep" />
          <svg viewBox="0 0 16 16" v-html="art.link" /><i class="dsep" />
          <svg v-for="n in ['newfolder', 'newdb', 'newbox']" :key="n" viewBox="0 0 16 16" v-html="art[n]" />
        </div>
      </div>
      <div class="dlist"><div class="ditem"><svg viewBox="0 0 16 16" v-html="art.sheet" /><span>{{ fileName }}</span></div></div>
      <div class="dform">
        <span class="fl">名称:</span><div class="finput">{{ fileName }}</div><button class="primary">添加</button>
        <span class="fl">显示类型:</span><div class="fcombo"><span>数据集、图层和结果</span><svg viewBox="0 0 16 16" v-html="art.drop" /></div><button>取消</button>
      </div>
    </div>
  </div>
</template>

<style>
html, body { overflow: hidden; }
</style>

<style scoped>
* { box-sizing: border-box; }
.window { position: relative; width: 1286px; height: 811px; display: flex; flex-direction: column; background: #f0f0f0; border: 1px solid #9b9b9b; border-top-color: #aaa; font: 12px/16px "Noto Sans", "Noto Sans CJK SC", sans-serif; color: #000; overflow: hidden; white-space: nowrap; }
svg { display: block; flex: none; width: 16px; height: 16px; }
i { display: block; flex: none; font-style: normal; }
u { text-underline-offset: 1px; }

.titlebar { height: 30px; flex: none; background: #fff; display: flex; align-items: center; padding-left: 7px; }
.logo { width: 18px; height: 18px; }
.title { margin-left: 4px; color: #999; letter-spacing: .38px; }
.winbtns { width: 110px; height: 14px; margin-left: auto; margin-right: 10px; }

.menu { height: 27px; flex: none; display: grid; grid-template-columns: 54px 55px 56px 56px 52px 55px 81px 68px 60px 60px; padding-left: 12px; align-items: center; background: linear-gradient(90deg, #efefef, #fbfbfb 80%); }

.bars { height: 53px; flex: none; background: linear-gradient(90deg, #efefef, #fbfbfb 80%); padding-top: 1px; }
.barrow { display: flex; height: 26px; padding-left: 3px; gap: 3px; }
.bar { display: flex; align-items: center; height: 25px; border-radius: 4px; background: linear-gradient(#fdfdfd, #f7f7f7 50%, #ececec); }
.standard { width: 617px; }
.tools { width: 525px; }
.layout { width: 384px; }
.editor { width: 436px; }
.maps { width: 455px; }
.grip { width: 7px; height: 17px; background: radial-gradient(circle at 4px 2px, #b3b3b3 1.1px, transparent 1.3px) 0 0 / 7px 4px; }
.sep { width: 6px; height: 15px; background: linear-gradient(#b5b5b5, #b5b5b5) 2px 0 / 1px 15px no-repeat; }
.tool { display: flex; height: 22px; flex: none; }
.bar .tool { margin-bottom: 1px; }
.cell { width: 22px; height: 22px; display: flex; align-items: center; justify-content: center; }
.on .cell { border: 1px solid #0f7bd4; background: #dbeaf7; }
.layout .on .cell { border-color: #a5c0d6; background: #e5edf4; }
.split { width: 11px; display: flex; align-items: center; justify-content: center; }
.arrow { border: solid transparent; border-width: 3px 3px 0; border-top-color: #000; }
.arrow.dim { border-top-color: #999; }
.add .cell { background: #8cc2ef; border: 1px solid #0f7bd4; }
.add .split { background: #b2d8f5; border: 1px solid #0f7bd4; border-left: 0; }
.scale { width: 148px; height: 20px; border: 1px solid #707070; background: #fff; display: flex; align-items: center; justify-content: space-between; padding: 0 0 0 2px; font: 10px/16px "DejaVu Sans Mono", monospace; margin-bottom: 1px; }
.zoom { width: 60px; border-color: #ccc; color: #6d6d6d; }
.zoom svg { opacity: .5; }
.zoom span { background: #f0f0f0; width: 36px; line-height: 14px; }
.label { display: flex; align-items: center; padding: 0 3px 0 5px; }
.label .arrow { margin-left: 2px; }
.overflow { margin-left: auto; width: 11px; height: 25px; border-radius: 0 3px 3px 0; background: linear-gradient(#f0f0f0, #d4d4d4 45%, #a4a4a4); }
.overflow svg { width: 11px; height: 24px; }

.work { flex: none; height: 676px; display: flex; }
.panehead { height: 22px; display: flex; align-items: center; padding: 0 1px 0 4px; background: linear-gradient(90deg, #bccbda, #d8e6f4); }
.panehead span { margin-right: auto; }
.panehead svg { width: 12px; height: 12px; margin-left: 3px; margin-right: 1px; }
.results .panehead { padding-right: 2px; padding-left: 3px; }
.toc { width: 295px; display: flex; flex-direction: column; margin-right: 5px; }
.toctools { height: 26px; flex: none; display: flex; align-items: center; padding-left: 4px; background: linear-gradient(#fcfcfc, #efefef); }
.tree { flex: 1; background: #fff; border: 1px solid #828790; padding-top: 1px; }
.node { display: flex; align-items: center; height: 20px; padding-left: 27px; }
.root { padding-left: 8px; }
.root svg { margin-left: 6px; }
.root b { font-weight: normal; background: #0078d7; color: #fff; height: 20px; line-height: 19px; padding: 0 2px; margin-left: 3px; }
.node span { margin-left: 8px; letter-spacing: .1px; }
.node span.wide { letter-spacing: .23px; }
.exp { width: 9px; height: 9px; border: 1px solid #999; border-radius: 1px; background: linear-gradient(#3e5ba3, #3e5ba3) 1px 3px / 5px 1px no-repeat, linear-gradient(#fff, #e6e6e6); }
.exp.plus { background: linear-gradient(#3e5ba3, #3e5ba3) 1px 3px / 5px 1px no-repeat, linear-gradient(#3e5ba3, #3e5ba3) 3px 1px / 1px 5px no-repeat, linear-gradient(#fff, #e6e6e6); }
.exp.none { visibility: hidden; }
.check { width: 11px; height: 11px; border: 1px solid #000; margin-left: 8px; }
.check svg { width: 9px; height: 9px; }
.legend { height: 100px; }
.val { padding-left: 82px; height: 20px; line-height: 20px; }
.ramprow { display: flex; padding-left: 59px; }
.ramp { width: 13px; height: 40px; background: linear-gradient(#ca5a37, #ef9c18 24%, #fff500 40%, #00dc0c 57%, #219590 76%, #0c3578); }
.limits { display: flex; flex-direction: column; margin-left: 5px; gap: 24px; margin-top: -1px; letter-spacing: .18px; }
.symbol { height: 20px; display: flex; align-items: flex-start; padding-left: 59px; }
.dot { width: 6px; height: 6px; margin: 7px 0 0 2px; }
.navy { fill: #00008b; }
.olive { fill: #98840f; }
.wine { fill: #a00046; }
.line { width: 14px; height: 1px; margin-top: 11px; }
.line.blue { background: #0000a8; }
.line.green { background: #2d9100; }

.map { width: 730px; display: grid; grid-template-columns: 711px 17px; grid-template-rows: 657px 17px; border-left: 2px solid #777; border-top: 2px solid #777; }
.canvas { grid-row: 1; background: #fff; border-bottom: 1px solid #e0e0e0; padding: 110px 0 0 130px; }
.raster { width: 410px; height: 411px; }
.vscroll { display: flex; flex-direction: column; align-items: center; justify-content: space-between; background: #f0f0f0; height: 656px; border-left: 1px solid #e3e3e3; }
.vscroll svg { width: 12px; height: 17px; }
.vscroll i { width: 14px; height: 20px; background: #cdcdcd; margin-top: 88px; }
.hscroll { grid-column: 1; display: flex; align-items: center; height: 16px; border-bottom: 1px solid #ddd; }
.viewbtn { width: 17px; height: 15px; display: flex; align-items: center; justify-content: center; }
.viewbtn svg { width: 9px; height: 9px; }
.viewbtn.on { background: #c1ddf2; border: solid #8ec4ea; border-width: 0 1px 1px 0; }
.vbar { width: 1px; height: 12px; background: #777; margin: 0 4px 0 2px; }
.larr { width: 12px; height: 12px; margin-left: 3px; }
.thumb { width: 24px; height: 14px; background: #cdcdcd; margin-left: 344px; }
.rarr { width: 12px; height: 12px; margin-left: auto; margin-right: 2px; }

.results { width: 248px; margin-left: 6px; display: flex; flex-direction: column; overflow: hidden; }
.restree { height: 633px; display: flex; flex-direction: column; background: #fff; border: 1px solid #828790; padding-top: 1px; }
.res { display: flex; align-items: center; height: 18px; padding-left: 8px; flex: none; }
.restree .res:first-child { margin-top: 1px; }
.res.sub { padding-left: 27px; }
.res svg { width: 15px; height: 15px; margin-left: 7px; }
.res span { margin-left: 4px; letter-spacing: .1px; }
.cur { background: #f0f0f0; }
.rscroll { margin-top: auto; height: 17px; background: #f0f0f0; display: flex; align-items: center; padding-left: 2px; }
.rscroll svg { width: 13px; height: 13px; }
.rscroll i { width: 204px; height: 15px; background: #cdcdcd; margin-left: 3px; margin-right: 8px; }
.tabs { display: flex; height: 20px; padding-left: 2px; }
.tab { width: 48px; height: 19px; display: flex; align-items: center; gap: 3px; padding-left: 4px; border: 1px solid #999; border-top: 0; border-left: 0; border-radius: 0 0 4px 4px; color: #777; }
.tab.active { width: 50px; border-left: 1px solid #999; background: #fff; color: #000; }
.tab svg { width: 15px; height: 15px; }

.status { flex: 1; display: flex; align-items: center; justify-content: flex-end; background: linear-gradient(#f0f0f0, #ededed); }
.coords { width: 281px; letter-spacing: .25px; margin-top: 2px; }
.status svg { width: 10px; height: 10px; margin: 8px 2px 0 7px; }

.dialog { position: absolute; left: 396px; top: 237px; width: 493px; height: 334px; background: #f0f0f0; border: 1px solid #6b6b6b; box-shadow: 0 5px 16px rgba(0, 0, 0, .32); display: flex; flex-direction: column; }
.dtitle { height: 30px; flex: none; background: #fff; display: flex; align-items: center; justify-content: space-between; padding: 0 9px 0 8px; }
.dtitle svg { width: 12px; height: 12px; margin-top: -1px; }
.dlook { height: 34px; flex: none; display: flex; align-items: flex-start; padding-left: 4px; }
.dlabel { width: 54px; flex: none; margin-top: 7px; letter-spacing: 0; }
.redbox { width: 203px; flex: none; height: 32px; border: 3px solid #fb1712; border-radius: 4px; padding: 1px 0 0; }
.dcombo { height: 24px; width: 197px; border: 1px solid #adadad; background: #e1e1e1; display: flex; align-items: center; padding: 0 1px 0 3px; font-size: 11px; letter-spacing: -.14px; }
.dcombo > svg { width: 15px; height: 15px; }
.dcombo > svg.dd { width: 16px; height: 16px; }
.dcombo span { margin-left: 4px; margin-right: auto; }
.dtools { display: grid; grid-template-columns: 23px 23px 24px 3px 32px 6px 18px 14px 14px 21px 24px 23px; align-items: center; justify-items: center; margin: 7px 0 0; }
.dsep { width: 1px; height: 18px; background: #999; }
.dtools .tri { width: 12px; height: 12px; }
.dlist { width: 479px; height: 188px; flex: none; margin-left: 6px; background: #fff; border: solid; border-width: 2px 1px 1px 2px; border-color: #777 #e3e3e3 #e3e3e3 #777; }
.ditem { display: flex; align-items: center; height: 17px; }
.ditem svg { width: 15px; height: 14px; }
.ditem span { height: 18px; line-height: 16px; padding: 0 1px; color: #fff; background: #0078d7; border: 1px dotted #ffa052; letter-spacing: .11px; }
.dform { display: grid; grid-template-columns: 80px 291px 73px; grid-template-rows: 22px 22px; row-gap: 6px; margin: 10px 0 0 9px; align-items: center; }
.fl { margin-top: -3px; }
.finput { height: 20px; border: 1px solid #7a7a7a; background: #fff; padding-left: 3px; line-height: 19px; font-size: 11px; margin-top: 2px; }
.fcombo { height: 21px; border: 1px solid #adadad; background: #e1e1e1; display: flex; align-items: center; justify-content: space-between; padding: 1px 0 0 2px; margin-top: 2px; }
button { margin: 0 0 0 26px; width: 73px; height: 21px; border: 1px solid #adadad; background: #e1e1e1; font: inherit; line-height: 18px; padding: 1px 0 0; color: #000; }
.primary { border: 2px solid #0078d7; }
</style>
